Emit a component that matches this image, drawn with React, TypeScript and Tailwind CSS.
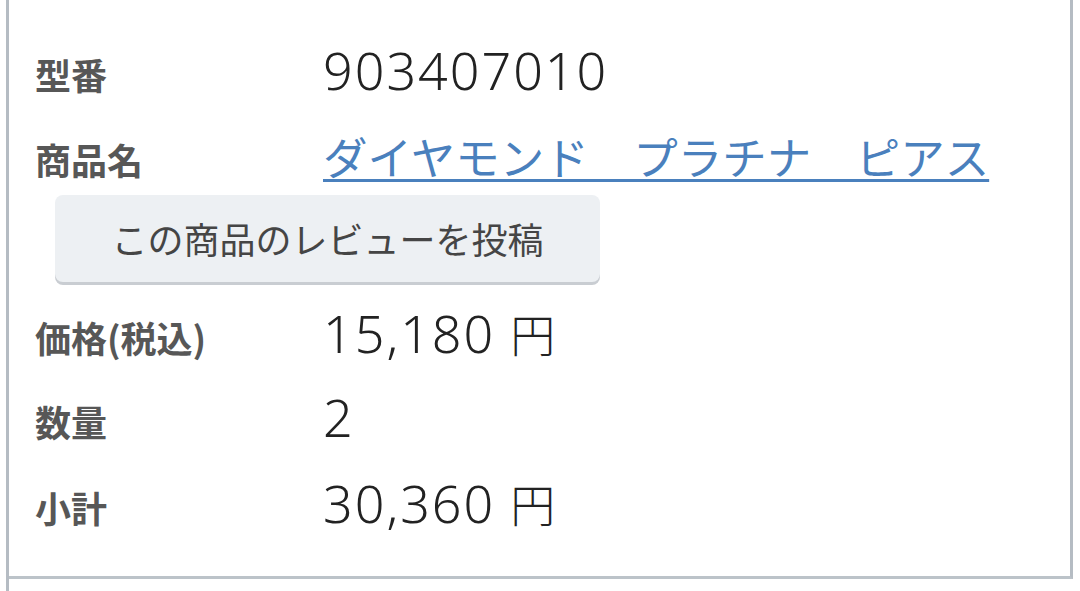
import React from "react";

const labelCls =
  "w-[314px] shrink-0 pl-[26px] text-[36px] leading-none font-bold text-[#575757] [font-family:'Noto_Sans_CJK_JP','Noto_Sans',sans-serif]";
const valueCls =
  "text-[52px] leading-none font-light text-[#222222] tracking-[2px] [font-family:'Noto_Sans','Noto_Sans_CJK_JP',sans-serif]";
const yenCls =
  "ml-[15px] text-[45px] leading-none font-light tracking-normal [font-family:'Noto_Sans_CJK_JP',sans-serif]";

function Row({
  label,
  children,
  className,
}: {
  label: string;
  children: React.ReactNode;
  className?: string;
}) {
  return (
    <div className={"flex items-baseline " + (className ?? "")}>
      <div className={labelCls}>{label}</div>
      <div className="flex items-baseline">{children}</div>
    </div>
  );
}

export default function App() {
  return (
    <div className="w-[1080px] h-[591px] bg-white overflow-hidden">
      <div className="ml-[6px] w-[1067px] h-[591px] border-l-[3px] border-[#b5bcc3]">
        <div className="h-[579px] border-r-[3px] border-b-[3px] border-r-[#b5bcc3] border-b-[#bcc3c9] flex flex-col">
          <Row label="型番" className="mt-[44px]">
            <span className={valueCls}>903407010</span>
          </Row>
          <Row label="商品名" className="mt-[38px]">
            <a
              href="#"
              className="text-[44.5px] leading-none text-[#4a80bd] underline decoration-[3px] underline-offset-[4px] [font-family:'Noto_Sans_CJK_JP',sans-serif]"
            >
              ダイヤモンド　プラチナ　ピアス
            </a>
          </Row>
          <button
            type="button"
            className="mt-[16px] ml-[46px] w-[545px] h-[87px] rounded-[8px] bg-[#edf0f3] shadow-[0_3px_0_#c9cdd2] text-[36px] text-[#454545] flex items-center justify-center [font-family:'Noto_Sans_CJK_JP',sans-serif]"
          >
            この商品のレビューを投稿
          </button>
          <Row label="価格(税込)" className="mt-[25px]">
            <span className={valueCls}>15,180</span>
            <span className={yenCls + " text-[#222222]"}>円</span>
          </Row>
          <Row label="数量" className="mt-[32px]">
            <span className={valueCls}>2</span>
          </Row>
          <Row label="小計" className="mt-[34px]">
            <span className={valueCls}>30,360</span>
            <span className={yenCls + " text-[#222222]"}>円</span>
          </Row>
        </div>
      </div>
    </div>
  );
}
